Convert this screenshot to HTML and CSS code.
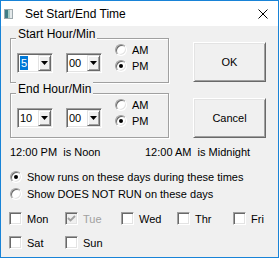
FILE: index.html
```html
<!DOCTYPE html>
<html>
<head>
    <meta charset="utf-8"/>
    <title>Set Start/End Time</title>
    <link rel="stylesheet" href="styles.css">
</head>
<body>

<div class="window">
    <div class="titlebar">
        <svg class="app-icon" width="9" height="10" viewBox="0 0 9 10">
            <rect x="0.5" y="0.5" width="8" height="9" fill="#e4e9eb" stroke="#9ea9ae"/>
            <rect x="1" y="1" width="3" height="8" fill="#3f7d86"/>
            <rect x="4" y="1" width="2" height="8" fill="#a8cbc6"/>
        </svg>
        <span class="title">Set Start/End Time</span>
        <svg class="close" width="10" height="10" viewBox="0 0 10 10">
            <path d="M0.5 0.5L9.5 9.5M9.5 0.5L0.5 9.5" stroke="#000" stroke-width="1"/>
        </svg>
    </div>

    <div class="client">
        <div class="top">
            <div class="groups">
                <div class="group">
                    <span class="legend">Start Hour/Min</span>
                    <div class="combo">
                        <span class="field"><span class="sel">5</span></span>
                        <span class="drop"></span>
                    </div>
                    <div class="combo">
                        <span class="field">00</span>
                        <span class="drop"></span>
                    </div>
                    <div class="ampm">
                        <div class="radio"><span class="dot"></span>AM</div>
                        <div class="radio"><span class="dot on"></span>PM</div>
                    </div>
                </div>
                <div class="group">
                    <span class="legend">End Hour/Min</span>
                    <div class="combo">
                        <span class="field">10</span>
                        <span class="drop"></span>
                    </div>
                    <div class="combo">
                        <span class="field">00</span>
                        <span class="drop"></span>
                    </div>
                    <div class="ampm">
                        <div class="radio"><span class="dot"></span>AM</div>
                        <div class="radio"><span class="dot on"></span>PM</div>
                    </div>
                </div>
            </div>
            <div class="buttons">
                <button class="btn">OK</button>
                <button class="btn">Cancel</button>
            </div>
        </div>

        <div class="notes">
            <span class="note">12:00 PM  is Noon</span>
            <span>12:00 AM  is Midnight</span>
        </div>

        <div class="show">
            <div class="radio"><span class="dot on"></span>Show runs on these days during these times</div>
            <div class="radio"><span class="dot"></span>Show DOES NOT RUN on these days</div>
        </div>

        <div class="days">
            <div class="check"><span class="box"></span>Mon</div>
            <div class="check off">
                <span class="box">
                    <svg width="11" height="11" viewBox="0 0 11 11">
                        <path d="M2 5L4.5 7.5L9 3" fill="none" stroke="#a0a0a0" stroke-width="1.8"/>
                    </svg>
                </span>Tue
            </div>
            <div class="check"><span class="box"></span>Wed</div>
            <div class="check"><span class="box"></span>Thr</div>
            <div class="check"><span class="box"></span>Fri</div>
            <div class="check"><span class="box"></span>Sat</div>
            <div class="check"><span class="box"></span>Sun</div>
        </div>
    </div>
</div>

</body>
</html>
```

FILE: styles.css
```css
body {
    margin: 0;
    font-family: "Liberation Sans", Arial, sans-serif;
    font-size: 11px;
    color: #000;
}

.window {
    width: 279px;
    height: 258px;
    box-sizing: border-box;
    border: 1px solid #1883d7;
    background: #f0f0f0;
    display: flex;
    flex-direction: column;
}

/* title bar */
.titlebar {
    flex: none;
    height: 25px;
    background: #fff;
    display: flex;
    align-items: center;
    padding: 0 10px 0 3px;
}

.app-icon {
    margin-right: 12px;
}

.title {
    font-size: 12px;
}

.close {
    margin-left: auto;
}

/* dialog body */
.client {
    flex: 1;
    padding: 12px 0 0 9px;
}

.top {
    display: flex;
}

.groups {
    width: 159px;
}

.group {
    position: relative;
    height: 45px;
    box-sizing: border-box;
    border: 1px solid #a0a0a0;
    box-shadow: inset 1px 1px #fff, 1px 1px #fff;
    display: flex;
    align-items: flex-start;
    padding: 3px 0 0 6px;
}

.group + .group {
    margin-top: 10px;
}

.legend {
    position: absolute;
    left: 5px;
    top: -12px;
    padding: 0 2px;
    background: #f0f0f0;
    font-size: 12px;
    line-height: 14px;
}

/* combo box */
.combo {
    margin: 11px 13px 0 0;
    width: 36px;
    height: 20px;
    box-sizing: border-box;
    display: flex;
    padding: 1px;
    border: 1px solid;
    border-color: #a0a0a0 #fff #fff #a0a0a0;
    box-shadow: inset 1px 1px #696969, inset -1px -1px #e3e3e3;
    background: #fff;
}

.field {
    flex: 1;
    padding-left: 1px;
    line-height: 16px;
}

.sel {
    display: inline-block;
    margin-top: 1px;
    padding: 0 1px;
    line-height: 14px;
    background: #0078d7;
    color: #fff;
}

.drop {
    width: 13px;
    box-sizing: border-box;
    border: 1px solid;
    border-color: #e3e3e3 #696969 #696969 #e3e3e3;
    box-shadow: inset 1px 1px #fff, inset -1px -1px #a0a0a0;
    background: #f0f0f0;
    display: flex;
    align-items: center;
    justify-content: center;
}

.drop:after {
    content: "";
    width: 7px;
    height: 4px;
    background: #000;
    clip-path: polygon(0 0, 100% 0, 50% 100%);
}

/* radio buttons */
.radio {
    display: flex;
    align-items: center;
    height: 16px;
}

.dot {
    position: relative;
    width: 12px;
    height: 12px;
    box-sizing: border-box;
    border-radius: 50%;
    border: 1px solid;
    border-color: #a0a0a0 #fff #fff #a0a0a0;
    box-shadow: inset 1px 1px #696969, inset -1px -1px #e3e3e3;
    background: #fff;
    margin-right: 5px;
}

.dot.on:after {
    content: "";
    position: absolute;
    left: 3px;
    top: 3px;
    width: 4px;
    height: 4px;
    border-radius: 50%;
    background: #000;
}

/* buttons */
.buttons {
    display: flex;
    flex-direction: column;
    gap: 16px;
    margin-left: 24px;
    padding-top: 4px;
}

.btn {
    width: 73px;
    height: 40px;
    padding: 0;
    font: inherit;
    color: #000;
    background: #f0f0f0;
    border: 1px solid;
    border-color: #fff #696969 #696969 #fff;
    box-shadow: inset 1px 1px #e3e3e3, inset -1px -1px #a0a0a0;
}

/* bottom part */
.notes {
    display: flex;
    margin-top: 8px;
    line-height: 13px;
    white-space: pre;
}

.note {
    width: 135px;
}

.show {
    margin-top: 9px;
}

.show .radio {
    height: 17px;
}

.days {
    display: grid;
    grid-template-columns: repeat(5, 56px);
    row-gap: 7px;
    margin: 8px 0 0 -1px;
}

.check {
    display: flex;
    align-items: center;
    height: 17px;
}

.box {
    width: 13px;
    height: 13px;
    box-sizing: border-box;
    border: 1px solid;
    border-color: #a0a0a0 #fff #fff #a0a0a0;
    box-shadow: inset 1px 1px #696969, inset -1px -1px #e3e3e3;
    background: #fff;
    margin-right: 5px;
}

.box svg {
    display: block;
}

.check.off {
    color: #a0a0a0;
}

.check.off .box {
    background: #f0f0f0;
}
```
